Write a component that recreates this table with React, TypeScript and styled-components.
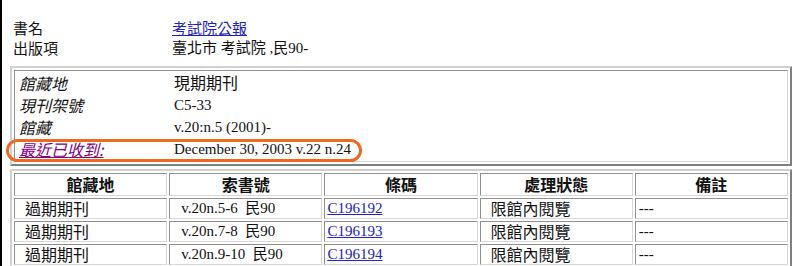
import React from "react";
import styled, { createGlobalStyle } from "styled-components";

const Global = createGlobalStyle`
  html, body { margin: 0; padding: 0; background: #fff; }
  body {
    font-family: "Liberation Serif", "Noto Sans CJK TC", serif;
    font-size: 16px;
    color: #111;
  }
`;

const cjk = `"Noto Sans CJK TC", sans-serif`;

const Page = styled.div`
  border-left: 2px solid #000;
  min-height: 266px;
  box-sizing: border-box;
  padding: 18px 8px 0 8px;
`;

const InfoGrid = styled.div`
  display: grid;
  grid-template-columns: 159px 1fr;
  grid-auto-rows: 20px;
  align-items: center;
  padding-left: 3px;
  margin-bottom: 8px;
`;

const Label = styled.div`
  font-family: ${cjk};
  font-size: 15px;
  line-height: 20px;
`;

const Value = styled.div<{ $latin?: boolean; $small?: boolean }>`
  font-size: ${(p) => (p.$latin || p.$small ? "15px" : "16px")};
  line-height: 19px;
`;

const Link = styled.a<{ $visited?: boolean; $italic?: boolean; $cjk?: boolean }>`
  color: ${(p) => (p.$visited ? "#800080" : "#2020cc")};
  text-decoration: underline;
  font-style: ${(p) => (p.$italic ? "italic" : "normal")};
  font-family: ${(p) => (p.$cjk ? cjk : `"Liberation Serif", serif`)};
`;

const Box = styled.div`
  position: relative;
  border: 2px solid;
  border-color: #d0d0d0 #808080 #808080 #d0d0d0;
  padding: 2px;
  margin-bottom: 3px;
`;

const BoxInner = styled.div`
  border: 1px solid;
  border-color: #909090 #d8d8d8 #d8d8d8 #909090;
  padding: 1px 0 1px 4px;
  display: grid;
  grid-template-columns: 155px 1fr;
  grid-auto-rows: 22px;
  align-items: center;
`;

const BoxLabel = styled.div`
  font-style: italic;
  font-family: ${cjk};
  font-size: 16px;
  line-height: 19px;
`;

const Highlight = styled.div`
  position: absolute;
  left: -6px;
  top: 71px;
  width: 350px;
  height: 17px;
  border: 3px solid #ef6a20;
  border-radius: 12px;
  pointer-events: none;
`;

const Table = styled.table`
  width: 100%;
  table-layout: fixed;
  border-collapse: separate;
  border-spacing: 2px;
  border: 2px solid;
  border-color: #d0d0d0 #808080 #808080 #d0d0d0;
`;

const Th = styled.th`
  border: 1px solid;
  border-color: #909090 #d8d8d8 #d8d8d8 #909090;
  font-family: ${cjk};
  font-size: 16px;
  font-weight: bold;
  line-height: 19px;
  height: 21px;
  padding: 0;
  text-align: center;
`;

const Td = styled.td<{ $pad: number; $cjk?: boolean }>`
  border: 1px solid;
  border-color: #909090 #d8d8d8 #d8d8d8 #909090;
  height: 19px;
  padding: 0 0 0 ${(p) => p.$pad}px;
  font-family: ${(p) => (p.$cjk ? cjk : `"Liberation Serif", "Noto Sans CJK TC", serif`)};
  font-size: ${(p) => (p.$cjk ? "16px" : "15px")};
  line-height: 19px;
  white-space: pre;
`;

const rows = [
  { call: "v.20n.5-6  民90", code: "C196192" },
  { call: "v.20n.7-8  民90", code: "C196193" },
  { call: "v.20n.9-10  民90", code: "C196194" },
];

export default function App() {
  return (
    <>
      <Global />
      <Page>
        <InfoGrid>
          <Label>書名</Label>
          <Value $small>
            <Link href="#" $cjk>考試院公報</Link>
          </Value>
          <Label>出版項</Label>
          <Value $small>臺北市 考試院 ,民90-</Value>
        </InfoGrid>
        <Box>
          <BoxInner>
            <BoxLabel>館藏地</BoxLabel>
            <Value>現期期刊</Value>
            <BoxLabel>現刊架號</BoxLabel>
            <Value $latin>C5-33</Value>
            <BoxLabel>館藏</BoxLabel>
            <Value $latin>v.20:n.5 (2001)-</Value>
            <BoxLabel>
              <Link href="#" $visited $italic $cjk>最近已收到:</Link>
            </BoxLabel>
            <Value $latin>December 30, 2003 v.22 n.24</Value>
          </BoxInner>
          <Highlight />
        </Box>
        <Table>
          <thead>
            <tr>
              <Th>館藏地</Th>
              <Th>索書號</Th>
              <Th>條碼</Th>
              <Th>處理狀態</Th>
              <Th>備註</Th>
            </tr>
          </thead>
          <tbody>
            {rows.map((r) => (
              <tr key={r.code}>
                <Td $pad={10} $cjk>過期期刊</Td>
                <Td $pad={11}>{r.call}</Td>
                <Td $pad={2}>
                  <Link href="#">{r.code}</Link>
                </Td>
                <Td $pad={10} $cjk>限館內閱覽</Td>
                <Td $pad={3}>---</Td>
              </tr>
            ))}
          </tbody>
        </Table>
      </Page>
    </>
  );
}
